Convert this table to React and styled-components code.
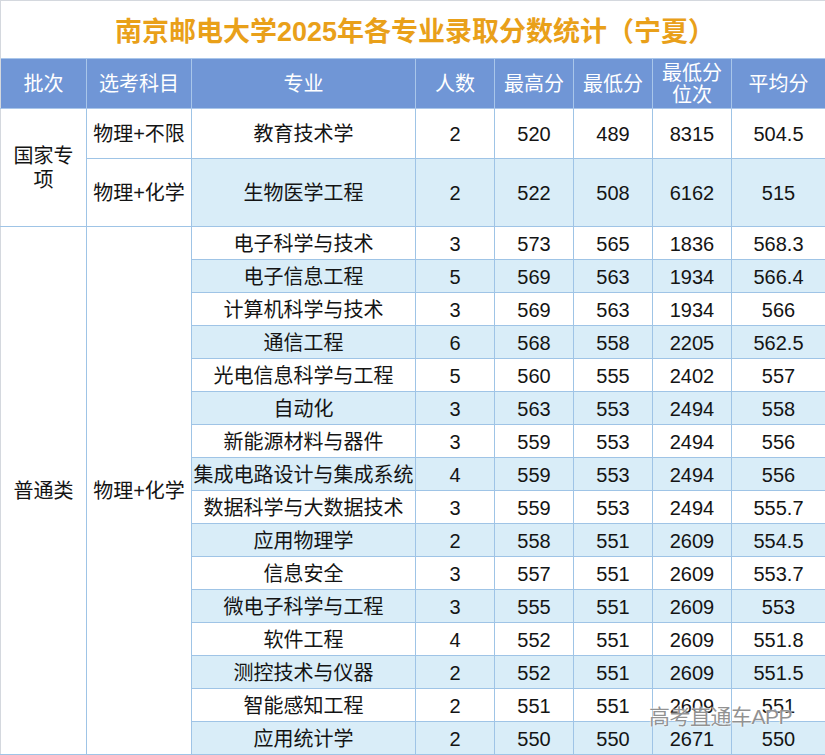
import React from 'react';
import styled, { createGlobalStyle } from 'styled-components';

const GlobalStyle = createGlobalStyle`
  html, body {
    margin: 0;
    padding: 0;
    background: #ffffff;
  }
  body {
    font-family: "Liberation Sans", "Noto Sans CJK SC", sans-serif;
  }
`;

const Page = styled.div`
  position: relative;
  width: 825px;
  height: 755px;
  overflow: hidden;
`;

const Table = styled.table`
  width: 825px;
  table-layout: fixed;
  border-collapse: collapse;
  font-size: 20px;
  color: #141414;
`;

const TitleCell = styled.th`
  height: 57px;
  padding: 0;
  border: 1px solid #d4d8de;
  border-bottom: none;
  font-size: 27px;
  font-weight: bold;
  color: #e9a019;
  text-align: center;
  vertical-align: middle;
  padding-left: 4px;
`;

const HeadCell = styled.th`
  height: 49px;
  padding: 0;
  background: #7096d6;
  border: 1px solid #a9c6ea;
  color: #ffffff;
  font-weight: normal;
  font-size: 20px;
  line-height: 22px;
  text-align: center;
  vertical-align: middle;
  &:first-child { border-left-color: #d4d8de; }
  &:last-child { border-right-color: #d4d8de; }
`;

const Cell = styled.td`
  height: ${p => p.$h || 32}px;
  padding: 0;
  border: 1px solid #9fc4e6;
  background: ${p => (p.$stripe ? '#d9edf8' : '#ffffff')};
  text-align: center;
  vertical-align: middle;
  line-height: 24px;
  white-space: nowrap;
  padding-top: 1px;
`;

const GroupCell = styled(Cell)`
  white-space: normal;
  padding: 0 6px;
  border-left-color: #d4d8de;
`;

const SubjectCell = styled(Cell)`
  white-space: nowrap;
`;

const LastCell = styled(Cell)`
  border-right-color: #d4d8de;
`;

const Watermark = styled.div`
  position: absolute;
  left: 649px;
  top: 700px;
  font-size: 21px;
  letter-spacing: -0.5px;
  color: rgba(110, 110, 110, 0.75);
  text-shadow: 0 0 1px #ffffff, 0 0 2px rgba(255, 255, 255, 0.9);
  pointer-events: none;
`;

const widths = [86, 105, 224, 79, 79, 79, 79, 94];

const special = [
  ['物理+不限', '教育技术学', 2, 520, 489, 8315, '504.5'],
  ['物理+化学', '生物医学工程', 2, 522, 508, 6162, '515'],
];

const general = [
  ['电子科学与技术', 3, 573, 565, 1836, '568.3'],
  ['电子信息工程', 5, 569, 563, 1934, '566.4'],
  ['计算机科学与技术', 3, 569, 563, 1934, '566'],
  ['通信工程', 6, 568, 558, 2205, '562.5'],
  ['光电信息科学与工程', 5, 560, 555, 2402, '557'],
  ['自动化', 3, 563, 553, 2494, '558'],
  ['新能源材料与器件', 3, 559, 553, 2494, '556'],
  ['集成电路设计与集成系统', 4, 559, 553, 2494, '556'],
  ['数据科学与大数据技术', 3, 559, 553, 2494, '555.7'],
  ['应用物理学', 2, 558, 551, 2609, '554.5'],
  ['信息安全', 3, 557, 551, 2609, '553.7'],
  ['微电子科学与工程', 3, 555, 551, 2609, '553'],
  ['软件工程', 4, 552, 551, 2609, '551.8'],
  ['测控技术与仪器', 2, 552, 551, 2609, '551.5'],
  ['智能感知工程', 2, 551, 551, 2609, '551'],
  ['应用统计学', 2, 550, 550, 2671, '550'],
];

const ValueCells = ({ values, stripe, h }) => (
  <>
    {values.map((v, i) =>
      i === values.length - 1 ? (
        <LastCell key={i} $stripe={stripe} $h={h}>{v}</LastCell>
      ) : (
        <Cell key={i} $stripe={stripe} $h={h}>{v}</Cell>
      )
    )}
  </>
);

export default function App() {
  return (
    <Page>
      <GlobalStyle />
      <Table>
        <colgroup>
          {widths.map((w, i) => <col key={i} style={{ width: w }} />)}
        </colgroup>
        <thead>
          <tr>
            <TitleCell colSpan={8}>南京邮电大学2025年各专业录取分数统计（宁夏）</TitleCell>
          </tr>
          <tr>
            <HeadCell>批次</HeadCell>
            <HeadCell>选考科目</HeadCell>
            <HeadCell>专业</HeadCell>
            <HeadCell>人数</HeadCell>
            <HeadCell>最高分</HeadCell>
            <HeadCell>最低分</HeadCell>
            <HeadCell>最低分<br />位次</HeadCell>
            <HeadCell>平均分</HeadCell>
          </tr>
        </thead>
        <tbody>
          {special.map(([subject, major, ...rest], i) => {
            const h = i === 0 ? 48 : 66;
            return (
              <tr key={major}>
                {i === 0 && <GroupCell rowSpan={2}>国家专项</GroupCell>}
                <SubjectCell $h={h}>{subject}</SubjectCell>
                <Cell $stripe={i === 1} $h={h}>{major}</Cell>
                <ValueCells values={rest} stripe={i === 1} h={h} />
              </tr>
            );
          })}
          {general.map(([major, ...rest], i) => (
            <tr key={major}>
              {i === 0 && <GroupCell rowSpan={general.length}>普通类</GroupCell>}
              {i === 0 && <SubjectCell rowSpan={general.length}>物理+化学</SubjectCell>}
              <Cell $stripe={i % 2 === 1} $h={31}>{major}</Cell>
              <ValueCells values={rest} stripe={i % 2 === 1} h={31} />
            </tr>
          ))}
        </tbody>
      </Table>
      <Watermark>高考直通车APP</Watermark>
    </Page>
  );
}
